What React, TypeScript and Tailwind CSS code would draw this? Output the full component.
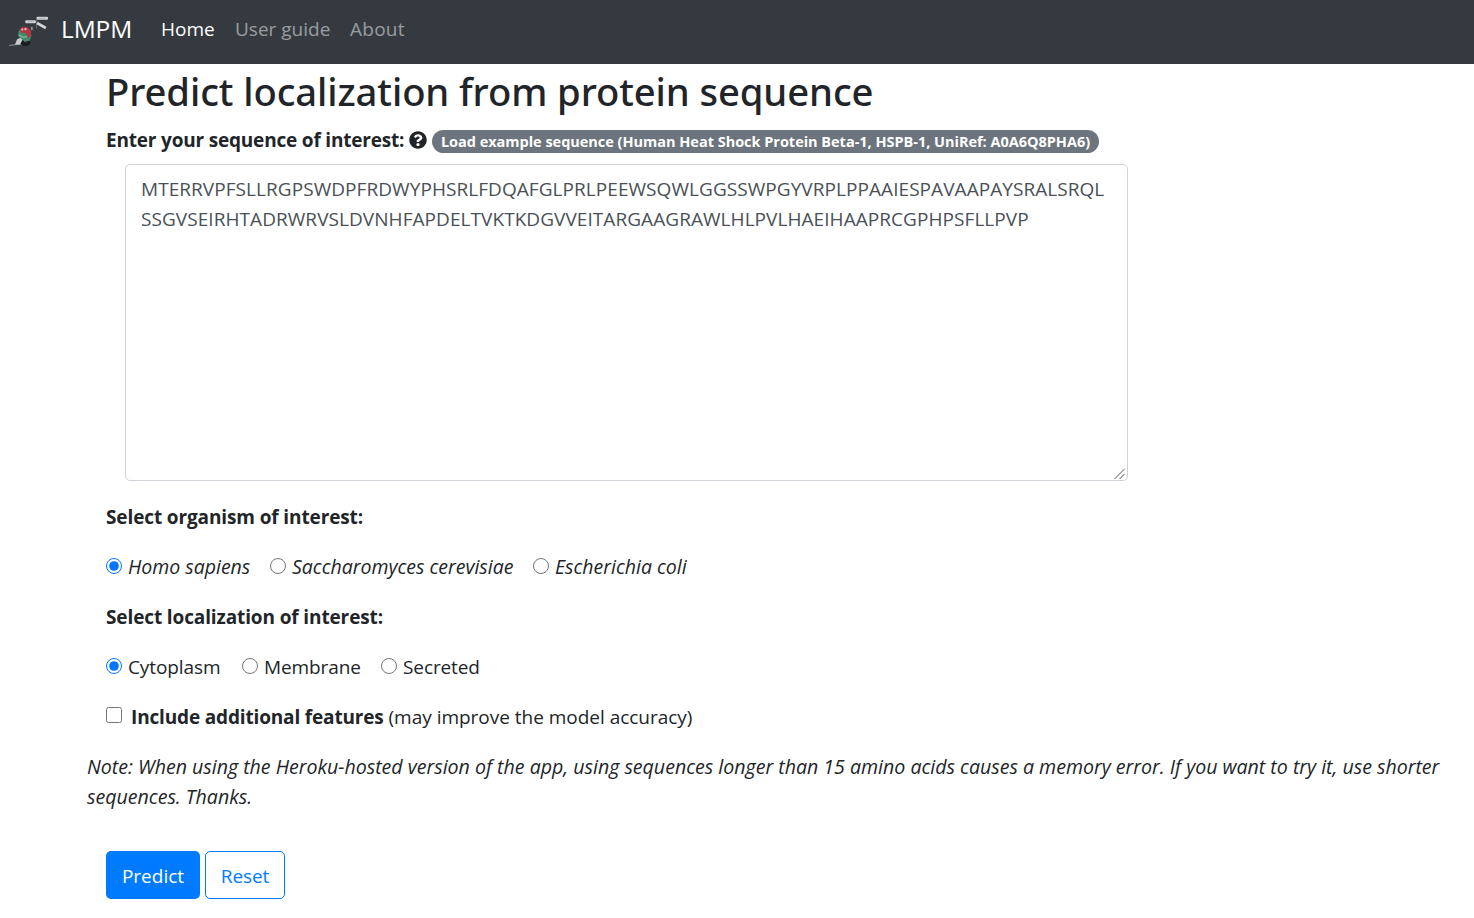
import { useState } from "react";
import type { ReactNode } from "react";
import { FaQuestionCircle } from "react-icons/fa";

const EXAMPLE =
  "MTERRVPFSLLRGPSWDPFRDWYPHSRLFDQAFGLPRLPEEWSQWLGGSSWPGYVRPLPPAAIESPAVAAPAYSRALSRQL\n" +
  "SSGVSEIRHTADRWRVSLDVNHFAPDELTVKTKDGVVEITARGAAGRAWLHLPVLHAEIHAAPRCGPHPSFLLPVP";

function Logo() {
  return (
    <svg viewBox="0 0 40 32" className="h-8 w-10" aria-hidden="true">
      <path d="M0 30.500 6 29.700l7-.5" stroke="#85898c" strokeWidth="1.2" fill="none" />
      <ellipse cx="16.300" cy="27.300" rx="5" ry="3.700" fill="#191b1d" />
      <path d="M6 29.500 8 24.500l3.500-2 2.300 2-2.800 5z" fill="#c9cbcc" />
      <path d="M9.500 16.500c1-3.500 8.500-5 11-1.500l2 5.500-2 5.500-5 .5-6.500-5.500z" fill="#45876c" />
      <path d="M11.200 14c1.500-2.500 6.500-2.800 8.300-1l2.500 3.500-.3 4.500-2.200 2-2.500-4.500-5.500-1.500z" fill="#b63640" />
      <circle cx="13.300" cy="14.500" r="1.100" fill="#dfc6c8" />
      <circle cx="16.500" cy="14.200" r="1.100" fill="#dfc6c8" />
      <path d="m10 20 4 2.300 4-.8" stroke="#66b58f" strokeWidth="1.700" fill="none" />
      <path d="m15 25 2 2.500" stroke="#777d80" strokeWidth="1" fill="none" />
      <path d="M22.800 11.800v3.400" stroke="#92979a" strokeWidth="1.800" />
      <path d="M27.500 2v11.500" stroke="#63686c" strokeWidth="1" />
      <rect x="16.300" y="5.300" width="10.500" height="3" rx="1" fill="#d2d4d5" />
      <rect x="27.800" y="1.700" width="11.200" height="3" rx="1" fill="#d2d4d5" />
      <path d="m28 8 8.800 5" stroke="#d2d4d5" strokeWidth="2.600" />
      <path d="M18.500 6.800h6M30 3.200h6.500" stroke="#a5a8aa" strokeWidth=".8" />
    </svg>
  );
}

function Heading({ children }: { children: ReactNode }) {
  return <div className="mb-5 h-[30px] text-[19px] font-bold tracking-[-0.12px]">{children}</div>;
}

function Radio({ name, label, checked, onChange, className }: {
  name: string; label: string; checked: boolean; onChange: () => void; className: string;
}) {
  return (
    <label className={"flex h-[30px] " + className}>
      <input type="radio" name={name} checked={checked} onChange={onChange}
        className="mt-[6px] mr-[6px] size-4 shrink-0 accent-[#0075ff]" />
      <span className="whitespace-nowrap">{label}</span>
    </label>
  );
}

export default function App() {
  const [sequence, setSequence] = useState(EXAMPLE);
  const [organism, setOrganism] = useState(0);
  const [place, setPlace] = useState(0);
  return (
    <div className="h-[918px] overflow-hidden bg-white font-['Open_Sans','Noto_Sans',sans-serif] text-[19px] leading-[30px] text-[#212529]">
      <nav className="flex h-16 bg-[#343a40] pt-[14px] pl-[9px]">
        <div className="pt-px"><Logo /></div>
        <span className="ml-3 w-[100px] text-[24.5px] tracking-[-0.1px] text-white">LMPM</span>
        <a className="w-[74px] text-white">Home</a>
        <a className="w-[115px] text-white/50">User guide</a>
        <a className="tracking-[0.25px] text-white/50">About</a>
      </nav>
      <main className="pr-5 pl-[87px]">
        <form className="pl-[19px]" onSubmit={(e) => e.preventDefault()}>
          <h1 className="h-[60px] pt-[3px] font-['Noto_Sans',sans-serif] text-[38.2px] leading-[48px] font-medium tracking-[-0.09px] whitespace-nowrap">
            Predict localization from protein sequence
          </h1>
          <div className="flex h-10 items-start pt-px">
            <span className="w-[303px] text-[19px] font-bold tracking-[-0.19px] whitespace-nowrap">Enter your sequence of interest:</span>
            <FaQuestionCircle className="mt-[6px] size-[18px] text-[#212529]" />
            <button type="button" className="mt-[5px] ml-[5px] h-[23px] w-[667px] rounded-full bg-[#6c757d] text-center text-[14.5px] leading-[23px] font-bold tracking-[-0.02px] whitespace-nowrap text-white">
              Load example sequence (Human Heat Shock Protein Beta-1, HSPB-1, UniRef: A0A6Q8PHA6)
            </button>
          </div>
          <div className="relative ml-[19px] h-[317px] w-[1003px]">
            <textarea spellCheck={false} value={sequence} onChange={(e) => setSequence(e.target.value)}
              className="block size-full resize-none rounded-[5px] border border-[#ced4da] px-[15px] pt-[9px] tracking-[0.06px] text-[#495057]" />
            <svg viewBox="0 0 12 12" className="pointer-events-none absolute right-[2px] bottom-[1px] size-3" aria-hidden="true">
              <path d="M.5 11 10.500 1M5.500 11l5-5" stroke="#555" strokeWidth="1" fill="none" />
            </svg>
          </div>
          <div className="pt-[21px]">
            <Heading>Select organism of interest:</Heading>
            <div className="mb-5 flex text-[19.5px] italic">
              {["Homo sapiens", "Saccharomyces cerevisiae", "Escherichia coli"].map((o, i) => (
                <Radio key={o} name="organism" label={o} checked={organism === i} onChange={() => setOrganism(i)}
                  className={["w-[164px]", "w-[263px]", "w-[180px]"][i]} />
              ))}
            </div>
            <Heading>Select localization of interest:</Heading>
            <div className="mb-5 flex tracking-[-0.1px]">
              {["Cytoplasm", "Membrane", "Secreted"].map((l, i) => (
                <Radio key={l} name="localization" label={l} checked={place === i} onChange={() => setPlace(i)}
                  className={["w-[136px]", "w-[139px]", "w-[120px]"][i]} />
              ))}
            </div>
            <label className="mb-5 flex h-[30px]">
              <input type="checkbox" className="mt-[5px] mr-[9px] size-4 shrink-0" />
              <span className="tracking-[-0.02px] whitespace-pre"><b className="tracking-[-0.16px]">Include additional features</b> (may improve the model accuracy)</span>
            </label>
          </div>
        </form>
        <p className="mb-[39px] text-[19.6px] tracking-[-0.015px] italic">
          Note: When using the Heroku-hosted version of the app, using sequences longer than 15 amino acids causes a memory error. If you want to try it, use shorter sequences. Thanks.
        </p>
        <div className="flex gap-[5px] pl-[19px]">
          <button className="h-12 w-[94px] rounded-[5px] bg-[#007bff] pt-px text-white">Predict</button>
          <button className="h-12 w-20 rounded-[5px] border border-[#007bff] pt-px tracking-[-0.1px] text-[#007bff]">Reset</button>
        </div>
      </main>
    </div>
  );
}
